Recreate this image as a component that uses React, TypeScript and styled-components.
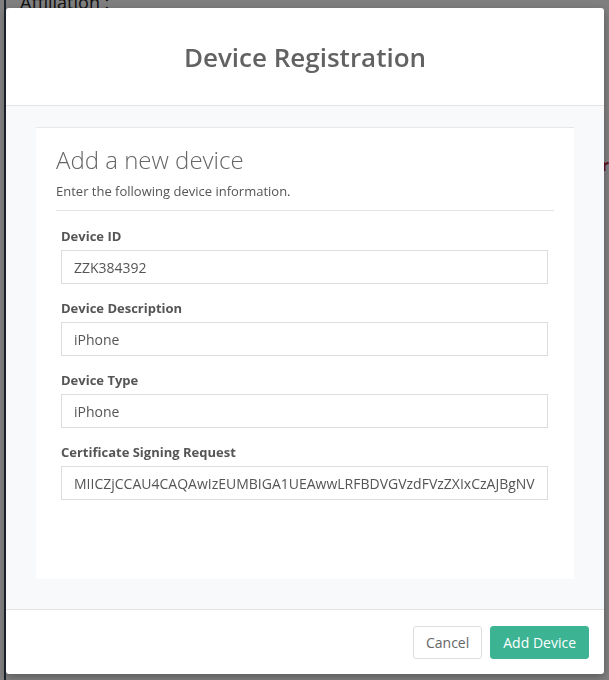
import React from 'react';
import styled, { createGlobalStyle } from 'styled-components';

const GlobalStyle = createGlobalStyle`
  html, body {
    margin: 0;
    padding: 0;
    background: #ffffff;
    font-family: "Open Sans", "Noto Sans", sans-serif;
  }
  * {
    box-sizing: border-box;
  }
`;

const Page = styled.div`
  height: 680px;
  margin-left: 4px;
  border-left: 2px solid #3a4a5e;
  padding: 0 0 0 14px;
  overflow: hidden;
  display: flex;
  flex-direction: column;
`;

const PageHeading = styled.div`
  margin-top: -9px;
  font-size: 18px;
  color: #222;
  line-height: 22px;
`;

const PageRow = styled.div`
  display: flex;
  justify-content: flex-end;
  margin-top: 142px;
  font-size: 16px;
  font-weight: 700;
  color: #c41f3a;
  line-height: 20px;
`;

const Backdrop = styled.div`
  position: fixed;
  inset: 0;
  background: rgba(0, 0, 0, 0.5);
  display: flex;
  align-items: flex-start;
  padding: 8px 0 0 6px;
`;

const Modal = styled.div`
  width: 598px;
  background: #ffffff;
  border-radius: 3px;
  box-shadow: 0 3px 9px rgba(0, 0, 0, 0.3);
  display: flex;
  flex-direction: column;
`;

const Header = styled.div`
  height: 98px;
  border-bottom: 1px solid #e5e5e5;
  display: flex;
  align-items: center;
  justify-content: center;
`;

const Title = styled.h2`
  margin: 0;
  font-size: 26px;
  font-weight: 600;
  color: #626262;
`;

const Body = styled.div`
  background: #f8f9fb;
  padding: 21px 30px 30px;
`;

const Card = styled.div`
  background: #ffffff;
  border-top: 1px solid #e6e8eb;
  height: 452px;
  padding: 17px 20px 20px;
`;

const CardTitle = styled.h3`
  margin: 0;
  font-size: 24px;
  font-weight: 300;
  line-height: 30px;
  color: #666666;
`;

const CardSubtitle = styled.p`
  margin: 7px 0 0;
  font-size: 13px;
  line-height: 18px;
  color: #555555;
`;

const Divider = styled.hr`
  margin: 10px 0 0;
  border: 0;
  border-top: 1px solid #e3e3e3;
`;

const Fields = styled.div`
  display: flex;
  flex-direction: column;
  gap: 15px;
  padding: 16px 6px 0 5px;
`;

const Field = styled.div`
  display: flex;
  flex-direction: column;
  gap: 5px;
`;

const Label = styled.label`
  font-size: 13px;
  font-weight: 700;
  line-height: 18px;
  color: #555555;
`;

const Input = styled.input`
  height: 34px;
  width: 100%;
  border: 1px solid #dddddd;
  border-radius: 0;
  padding: 0 12px;
  font-family: "Open Sans", "Noto Sans", sans-serif;
  font-size: 14px;
  color: #555555;
  background: #ffffff;
  outline: none;
`;

const Footer = styled.div`
  border-top: 1px solid #e5e5e5;
  display: flex;
  justify-content: flex-end;
  gap: 8px;
  padding: 16px 15px 15px;
`;

const Button = styled.button<{ $primary?: boolean }>`
  height: 33px;
  padding: 0 12px;
  border-radius: 3px;
  font-family: "Open Sans", "Noto Sans", sans-serif;
  font-size: 14px;
  cursor: pointer;
  border: 1px solid ${(p) => (p.$primary ? '#3cb393' : '#dddddd')};
  background: ${(p) => (p.$primary ? '#3cb393' : '#ffffff')};
  color: ${(p) => (p.$primary ? '#ffffff' : '#666666')};
`;

const fields = [
  { label: 'Device ID', value: 'ZZK384392' },
  { label: 'Device Description', value: 'iPhone' },
  { label: 'Device Type', value: 'iPhone' },
  {
    label: 'Certificate Signing Request',
    value: 'MIICZjCCAU4CAQAwIzEUMBIGA1UEAwwLRFBDVGVzdFVzZXIxCzAJBgNVBAYTAlVT',
  },
];

export default function App() {
  return (
    <>
      <GlobalStyle />
      <Page>
        <PageHeading>Affiliation :</PageHeading>
        <PageRow>Error</PageRow>
      </Page>
      <Backdrop>
        <Modal>
          <Header>
            <Title>Device Registration</Title>
          </Header>
          <Body>
            <Card>
              <CardTitle>Add a new device</CardTitle>
              <CardSubtitle>Enter the following device information.</CardSubtitle>
              <Divider />
              <Fields>
                {fields.map((f) => (
                  <Field key={f.label}>
                    <Label>{f.label}</Label>
                    <Input defaultValue={f.value} readOnly />
                  </Field>
                ))}
              </Fields>
            </Card>
          </Body>
          <Footer>
            <Button>Cancel</Button>
            <Button $primary>Add Device</Button>
          </Footer>
        </Modal>
      </Backdrop>
    </>
  );
}
